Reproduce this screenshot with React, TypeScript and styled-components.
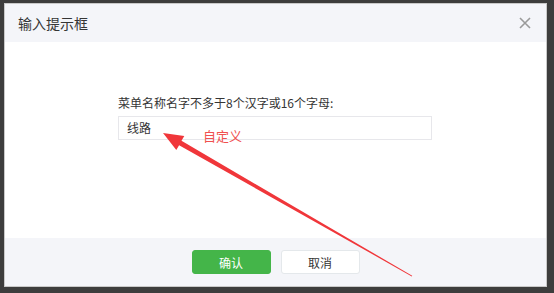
import styled, { createGlobalStyle } from 'styled-components';

const GlobalStyle = createGlobalStyle`
  html, body {
    margin: 0;
    padding: 0;
    background: #3d3d3d;
  }
  body {
    font-family: "Noto Sans CJK SC", "Noto Sans", sans-serif;
  }
`;

const Page = styled.div`
  position: relative;
  width: 554px;
  height: 293px;
  box-sizing: border-box;
  padding: 3px 7px 6px 4px;
  background: #3d3d3d;
`;

const Dialog = styled.div`
  display: flex;
  flex-direction: column;
  height: 100%;
  box-sizing: border-box;
  border: 1px solid #c9c9c9;
  background: #fff;
`;

const Header = styled.div`
  display: flex;
  align-items: center;
  justify-content: space-between;
  height: 38px;
  padding: 0 15px 0 13px;
  background: #f4f5f9;
`;

const Title = styled.span`
  font-size: 14px;
  color: #353535;
`;

const CloseIcon = styled.svg`
  width: 12px;
  height: 12px;
`;

const Body = styled.div`
  flex: 1;
  padding: 53px 0 0 113px;
`;

const Label = styled.div`
  font-size: 12px;
  line-height: 16px;
  color: #353535;
  margin-bottom: 5px;
`;

const Input = styled.div`
  width: 314px;
  height: 24px;
  box-sizing: border-box;
  border: 1px solid #e7e7eb;
  padding: 0 8px;
  font-size: 12px;
  line-height: 22px;
  color: #353535;
`;

const Footer = styled.div`
  display: flex;
  justify-content: center;
  gap: 10px;
  height: 48px;
  padding-top: 12px;
  box-sizing: border-box;
  background: #f4f5f9;
`;

const Button = styled.div<{ $primary?: boolean }>`
  width: 79px;
  height: 24px;
  box-sizing: border-box;
  border-radius: 3px;
  display: flex;
  align-items: center;
  justify-content: center;
  font-size: 12px;
  color: ${(p) => (p.$primary ? '#fff' : '#353535')};
  background: ${(p) => (p.$primary ? '#44b549' : '#fff')};
  border: 1px solid ${(p) => (p.$primary ? '#44b549' : '#e4e8eb')};
`;

const Annotation = styled.svg`
  position: absolute;
  left: 0;
  top: 0;
  width: 554px;
  height: 293px;
  pointer-events: none;
`;

const Note = styled.span`
  position: absolute;
  left: 203px;
  top: 126px;
  font-size: 13px;
  color: #f0504f;
`;

export default function App() {
  return (
    <>
      <GlobalStyle />
      <Page>
        <Dialog>
          <Header>
            <Title>输入提示框</Title>
            <CloseIcon viewBox="0 0 12 12">
              <path d="M1 1L11 11M11 1L1 11" stroke="#9a9a9a" strokeWidth="1.6" />
            </CloseIcon>
          </Header>
          <Body>
            <Label>菜单名称名字不多于8个汉字或16个字母:</Label>
            <Input>线路</Input>
          </Body>
          <Footer>
            <Button $primary>确认</Button>
            <Button>取消</Button>
          </Footer>
        </Dialog>
        <Annotation viewBox="0 0 554 293">
          <polygon
            points="163,133 184.3,136.1 181.5,140.8 412.2,275.8 411.8,276.4 179.1,145.2 176.3,149.9"
            fill="#f0363a"
          />
        </Annotation>
        <Note>自定义</Note>
      </Page>
    </>
  );
}
